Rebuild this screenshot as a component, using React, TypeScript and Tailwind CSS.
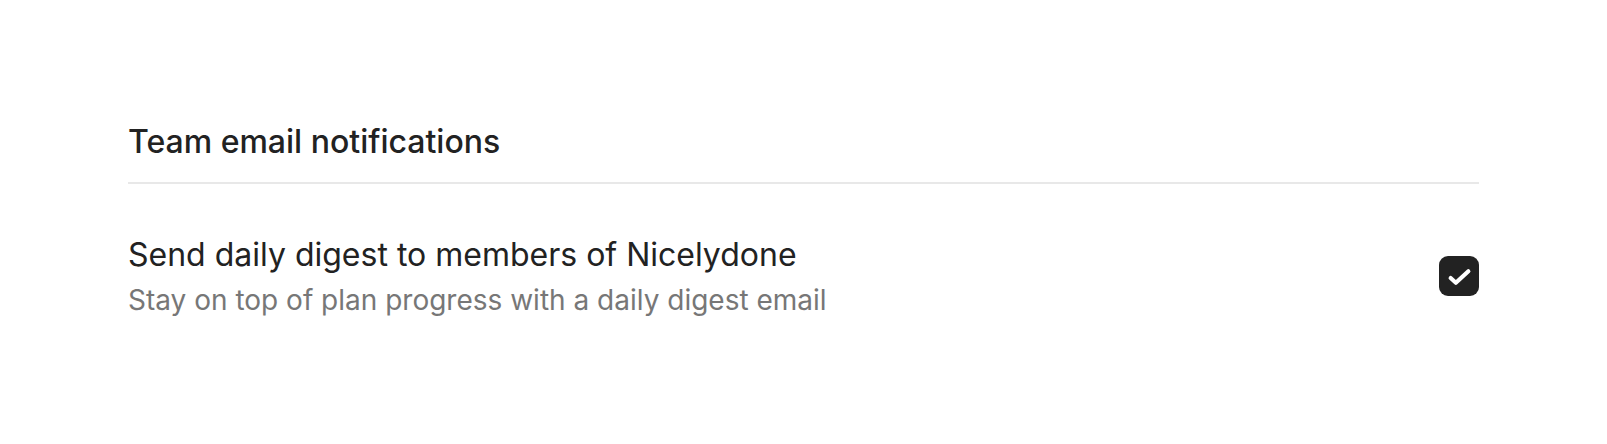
export default function App() {
  return (
    <div className="min-h-screen bg-white px-32 pt-[120px]" style={{ fontFamily: 'Inter, sans-serif' }}>
      <h2 className="text-[32px] font-medium leading-[44px] text-[#222222] pb-[18px] border-b-2 border-[#e8e8e8]">
        Team email notifications
      </h2>
      <div className="flex items-center justify-between pt-[49px]">
        <div className="flex flex-col">
          <span className="text-[32px] leading-[44px] text-[#222222]">Send daily digest to members of Nicelydone</span>
          <span className="mt-[3px] text-[28px] leading-[40px] text-[#777777]">Stay on top of plan progress with a daily digest email</span>
        </div>
        <div className="w-10 h-10 -mt-px rounded-[9px] bg-[#222222] flex items-center justify-center">
          <svg width="25" height="25" viewBox="0 0 24 24" fill="none" stroke="white" strokeWidth="4" strokeLinecap="round" strokeLinejoin="round">
            <path d="M3.5 13.5l5 4.5L20.5 7" />
          </svg>
        </div>
      </div>
    </div>
  );
}
